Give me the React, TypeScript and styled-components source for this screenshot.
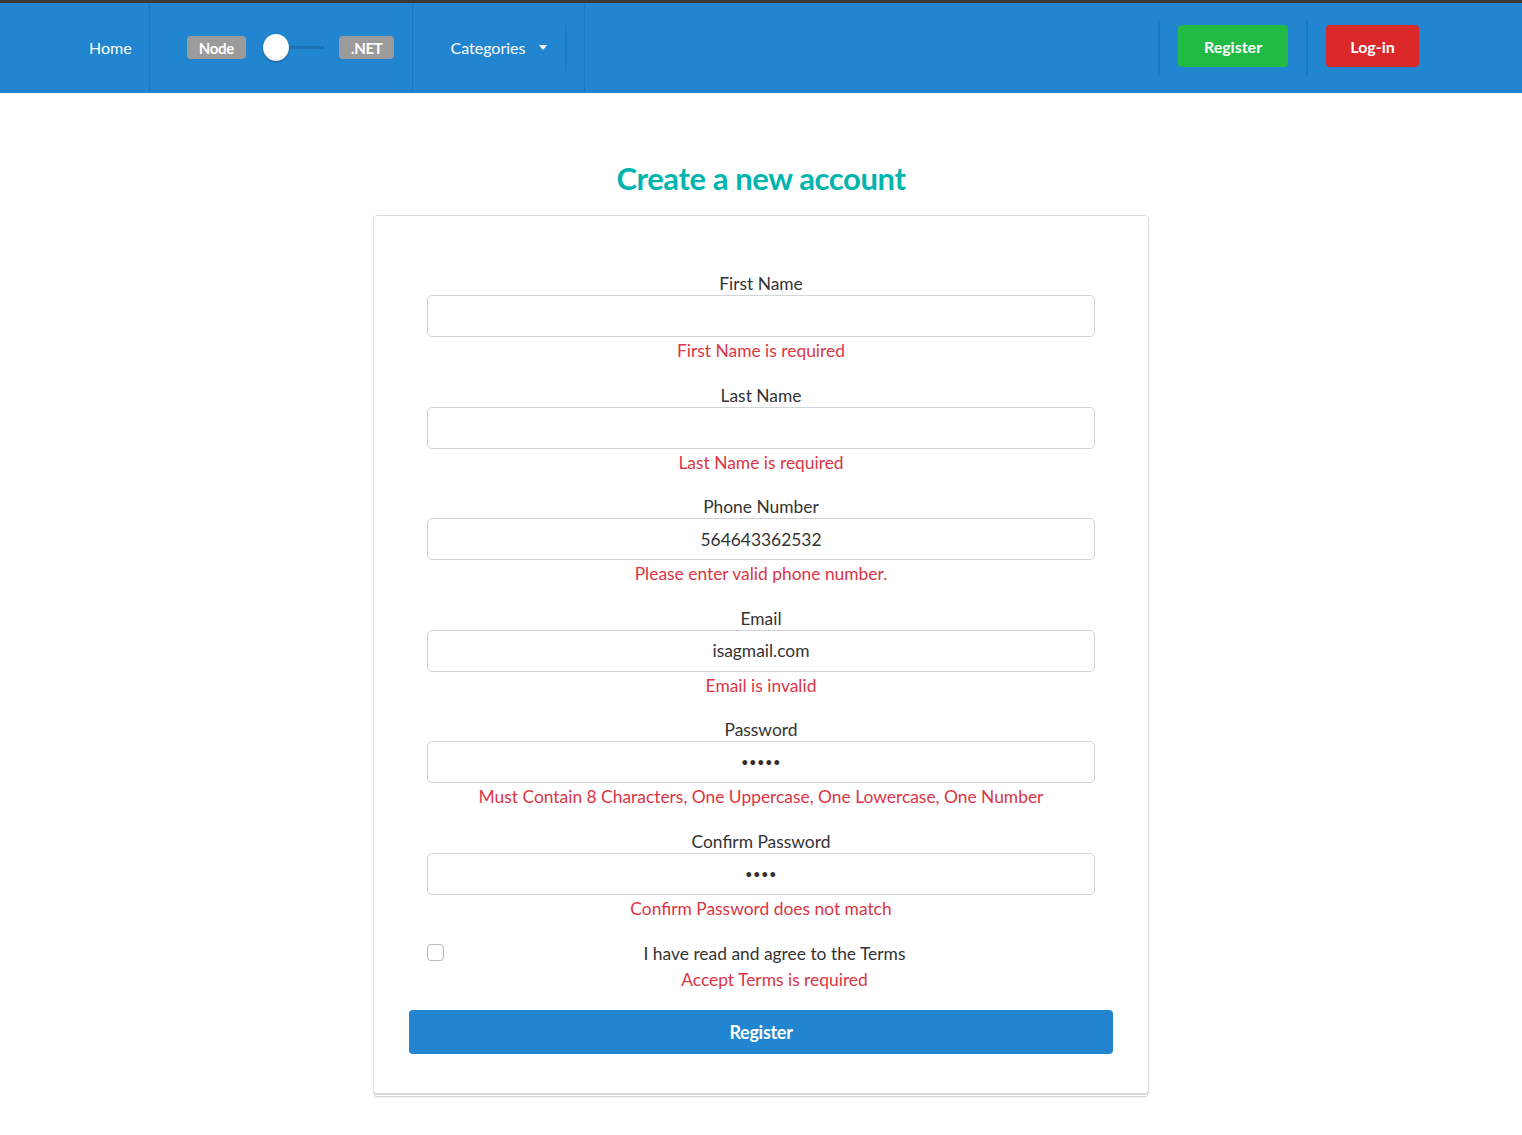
import styled, { createGlobalStyle } from "styled-components";

const GlobalStyle = createGlobalStyle`
	body {
		margin: 0;
		font-family: Lato, "Open Sans", sans-serif;
		background: #fff;
	}
	* {
		box-sizing: border-box;
	}
`;

interface Field {
	label: string;
	type: string;
	value: string;
	error: string;
}

const fields: Field[] = [
	{ label: "First Name", type: "text", value: "", error: "First Name is required" },
	{ label: "Last Name", type: "text", value: "", error: "Last Name is required" },
	{ label: "Phone Number", type: "text", value: "564643362532", error: "Please enter valid phone number." },
	{ label: "Email", type: "text", value: "isagmail.com", error: "Email is invalid" },
	{
		label: "Password",
		type: "password",
		value: "12345",
		error: "Must Contain 8 Characters, One Uppercase, One Lowercase, One Number",
	},
	{ label: "Confirm Password", type: "password", value: "1234", error: "Confirm Password does not match" },
];

const App = () => {
	return (
		<>
			<GlobalStyle />
			<Nav>
				<NavItem $padLeft={89} $padRight={17} $divider>
					Home
				</NavItem>
				<NavItem $padLeft={37} $padRight={18} $divider>
					<Badge>Node</Badge>
					<Toggle>
						<Knob />
						<Track />
					</Toggle>
					<Badge>.NET</Badge>
				</NavItem>
				<NavItem $padLeft={37} $padRight={18}>
					Categories
					<Caret />
				</NavItem>
				<ShortDivider $height={46} />
				<FullDivider $left={17} />
				<Spacer />
				<ShortDivider $height={56} />
				<ButtonSlot>
					<NavButton $bg="#21ba45" $width={110}>
						Register
					</NavButton>
				</ButtonSlot>
				<ShortDivider $height={56} />
				<ButtonSlot>
					<NavButton $bg="#db2828" $width={93}>
						Log-in
					</NavButton>
				</ButtonSlot>
			</Nav>

			<Main>
				<Title>Create a new account</Title>
				<Card>
					{fields.map((f) => (
						<FieldBlock key={f.label}>
							<Label>{f.label}</Label>
							<Input type={f.type} defaultValue={f.value} />
							<Error>{f.error}</Error>
						</FieldBlock>
					))}
					<TermsRow>
						<Checkbox type="checkbox" />
						<TermsText>
							<Label>I have read and agree to the Terms</Label>
							<Error $gap={3}>Accept Terms is required</Error>
						</TermsText>
					</TermsRow>
					<SubmitButton>Register</SubmitButton>
				</Card>
			</Main>
		</>
	);
};

export default App;

//STYLES
const Nav = styled.nav`
	display: flex;
	align-items: stretch;
	height: 93px;
	background: #2185d0;
	border-top: 3px solid #3a3a3a;
	color: #fff;
	font-size: 16px;
	padding-bottom: 1px;
`;

const NavItem = styled.div<{ $padLeft: number; $padRight: number; $divider?: boolean }>`
	display: flex;
	align-items: center;
	padding: 0 ${(p) => p.$padRight}px 0 ${(p) => p.$padLeft}px;
	border-right: ${(p) => (p.$divider ? "1px solid #1d76ba" : "none")};
`;

const Badge = styled.span`
	display: inline-flex;
	align-items: center;
	justify-content: center;
	height: 23px;
	padding: 0 12px;
	border-radius: 4px;
	background: #9b9b9b;
	color: #fff;
	font-weight: 700;
	font-size: 15px;
	letter-spacing: -0.3px;
`;

const Toggle = styled.div`
	display: flex;
	align-items: center;
	margin: 0 15px 0 17px;
`;

const Knob = styled.div`
	width: 26px;
	height: 27px;
	border-radius: 50%;
	background: #fff;
	box-shadow: 0 1px 2px rgba(0, 0, 0, 0.35), inset 0 -2px 3px rgba(0, 0, 0, 0.08);
`;

const Track = styled.div`
	width: 35px;
	height: 3px;
	background: #1b72b6;
`;

const Caret = styled.span`
	width: 0;
	height: 0;
	margin-left: 14px;
	border-left: 4.5px solid transparent;
	border-right: 4.5px solid transparent;
	border-top: 5px solid #fff;
`;

const ShortDivider = styled.div<{ $height: number }>`
	align-self: center;
	width: 2px;
	height: ${(p) => p.$height}px;
	background: #1d78bd;
`;

const FullDivider = styled.div<{ $left: number }>`
	width: 1px;
	margin-left: ${(p) => p.$left}px;
	background: #1d76ba;
`;

const Spacer = styled.div`
	flex: 1;
`;

const ButtonSlot = styled.div`
	display: flex;
	align-items: center;
	padding: 0 18px;
	padding-bottom: 3px;

	&:last-child {
		padding-right: 103px;
	}
`;

const NavButton = styled.button<{ $bg: string; $width: number }>`
	width: ${(p) => p.$width}px;
	height: 42px;
	border: none;
	border-radius: 4px;
	background: ${(p) => p.$bg};
	color: #fff;
	font-family: Lato, sans-serif;
	font-weight: 700;
	font-size: 16px;
	cursor: pointer;
`;

const Main = styled.main`
	display: flex;
	flex-direction: column;
	align-items: center;
	padding-top: 65px;
	padding-bottom: 40px;
`;

const Title = styled.h2`
	margin: 0 0 17px;
	color: #00b5ad;
	font-family: Lato, sans-serif;
	font-weight: 700;
	font-size: 31px;
	line-height: 40px;
	letter-spacing: -0.4px;
`;

const Card = styled.div`
	width: 776px;
	padding: 56px 35px 39px;
	border: 1px solid #dedede;
	border-radius: 4px;
	background: #fff;
	box-shadow: 0 1px 0 #d4d4d5, 0 3px 0 -1px #fff, 0 4px 1px -1px #d4d4d5, 0 4px 4px -2px rgba(0, 0, 0, 0.12);
	display: flex;
	flex-direction: column;
`;

const FieldBlock = styled.div`
	display: flex;
	flex-direction: column;
	align-items: stretch;
	margin: 0 18px 20.5px;
	text-align: center;
`;

const Label = styled.div`
	color: #333;
	font-size: 17.4px;
	line-height: 23px;
	font-weight: 400;
`;

const Input = styled.input`
	height: 42px;
	width: 100%;
	padding: 0 14px;
	border: 1px solid #cfd3da;
	border-radius: 5px;
	background: #fff;
	color: #333;
	font-family: Lato, sans-serif;
	font-size: 17.4px;
	text-align: center;
	outline: none;

	&[type="password"] {
		font-size: 13px;
		letter-spacing: 0.5px;
	}
`;

const Error = styled.div<{ $gap?: number }>`
	margin-top: ${(p) => p.$gap ?? 2}px;
	color: #dc3545;
	font-size: 17.4px;
	line-height: 24px;
`;

const TermsRow = styled.div`
	display: flex;
	align-items: flex-start;
	gap: 10px;
	margin: 1px 18px 0;
`;

const Checkbox = styled.input`
	appearance: none;
	width: 17px;
	height: 17px;
	margin: 2px 0 0;
	border: 1px solid #b9b9b9;
	border-radius: 4px;
	background: #fff;
`;

const TermsText = styled.div`
	flex: 1;
	text-align: center;
`;

const SubmitButton = styled.button`
	margin-top: 18px;
	height: 44px;
	width: 100%;
	border: none;
	border-radius: 4px;
	background: #2185d0;
	color: #fff;
	font-family: Lato, sans-serif;
	font-weight: 700;
	font-size: 18px;
	letter-spacing: -0.3px;
	cursor: pointer;
`;
